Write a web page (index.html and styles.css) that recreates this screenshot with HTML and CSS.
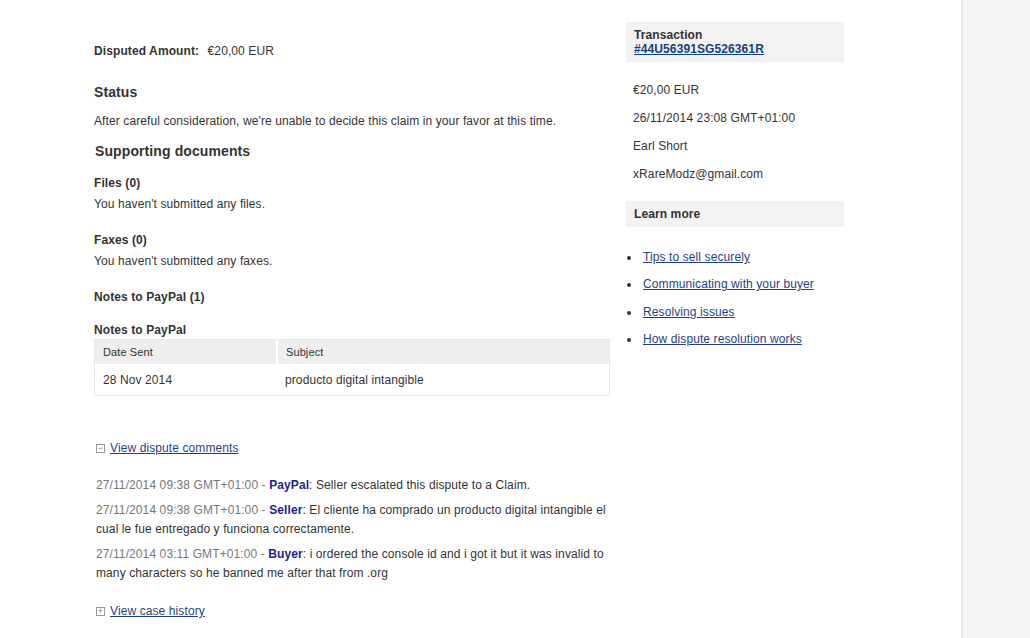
FILE: index.html
```html
<!DOCTYPE html>
<html lang="en">
<head>
    <meta charset="UTF-8">
    <title>Claim details</title>
    <link rel="stylesheet" href="styles.css">
</head>
<body>
    <div class="page">
        <div class="main">
            <div class="left">
                <div class="amount"><strong>Disputed Amount:</strong> <span>€20,00 EUR</span></div>

                <h2 class="status-title">Status</h2>
                <p class="status-text">After careful consideration, we're unable to decide this claim in your favor at this time.</p>

                <h2 class="docs-title">Supporting documents</h2>

                <h3 class="sub first">Files (0)</h3>
                <p class="sub-text">You haven't submitted any files.</p>

                <h3 class="sub">Faxes (0)</h3>
                <p class="sub-text">You haven't submitted any faxes.</p>

                <h3 class="sub">Notes to PayPal (1)</h3>
                <h3 class="sub notes">Notes to PayPal</h3>

                <table class="notes-table">
                    <thead>
                        <tr>
                            <th class="col-date">Date Sent</th>
                            <th>Subject</th>
                        </tr>
                    </thead>
                    <tbody>
                        <tr>
                            <td>28 Nov 2014</td>
                            <td>producto digital intangible</td>
                        </tr>
                    </tbody>
                </table>

                <div class="toggle comments-toggle">
                    <span class="box">&minus;</span>
                    <a href="#">View dispute comments</a>
                </div>

                <div class="comments">
                    <p><span class="time">27/11/2014 09:38 GMT+01:00 -</span> <b>PayPal</b>: Seller escalated this dispute to a Claim.</p>
                    <p><span class="time">27/11/2014 09:38 GMT+01:00 -</span> <b>Seller</b>: El cliente ha comprado un producto digital intangible el cual le fue entregado y funciona correctamente.</p>
                    <p><span class="time">27/11/2014 03:11 GMT+01:00 -</span> <b>Buyer</b>: i ordered the console id and i got it but it was invalid to many characters so he banned me after that from .org</p>
                </div>

                <div class="toggle history-toggle">
                    <span class="box">+</span>
                    <a href="#">View case history</a>
                </div>
            </div>

            <div class="side">
                <div class="side-head tx">
                    <strong>Transaction</strong>
                    <a href="#">#44U56391SG526361R</a>
                </div>
                <div class="tx-info">
                    <p>€20,00 EUR</p>
                    <p>26/11/2014 23:08 GMT+01:00</p>
                    <p>Earl Short</p>
                    <p>xRareModz@gmail.com</p>
                </div>

                <div class="side-head learn">
                    <strong>Learn more</strong>
                </div>
                <ul class="links">
                    <li><a href="#">Tips to sell securely</a></li>
                    <li><a href="#">Communicating with your buyer</a></li>
                    <li><a href="#">Resolving issues</a></li>
                    <li><a href="#">How dispute resolution works</a></li>
                </ul>
            </div>
        </div>
        <div class="strip"></div>
    </div>
</body>
</html>
```

FILE: styles.css
```css
html, body {
    height: 100%;
}

body {
    margin: 0;
    font-family: "Liberation Sans", Arial, sans-serif;
    font-size: 12px;
    letter-spacing: 0.1px;
    color: #333;
    background: #fff;
}

.page {
    display: flex;
    min-height: 100%;
}

.main {
    width: 961px;
    display: flex;
    padding-left: 94px;
    box-sizing: border-box;
}

.strip {
    flex: 1;
    background: #f5f5f5;
    border-left: 2px solid #e6e6e6;
}

p, h2, h3 {
    margin: 0;
}

a {
    color: #1f3f86;
    text-decoration: underline;
}

/* left column */
.left {
    width: 516px;
    padding-top: 41px;
}

.amount {
    line-height: 20px;
}

.amount strong {
    margin-right: 5px;
}

h2 {
    font-size: 14px;
    font-weight: bold;
    line-height: 20px;
}

.status-title {
    margin-top: 21px;
}

.status-text {
    line-height: 20px;
    margin-top: 9px;
}

.docs-title {
    margin-top: 10px;
    padding-left: 1px;
}

h3.sub {
    font-size: 12px;
    font-weight: bold;
    line-height: 20px;
    margin-top: 16px;
}

h3.sub.first {
    margin-top: 12px;
}

h3.sub.notes {
    margin-top: 14px;
    line-height: 19px;
}

.sub-text {
    line-height: 20px;
    margin-top: 1px;
}

.notes-table {
    width: 100%;
    border-collapse: collapse;
    border: 1px solid #e6e6e6;
    margin-top: -1px;
}

.notes-table th {
    background: #eeeeee;
    font-weight: normal;
    font-size: 11px;
    text-align: left;
    height: 24px;
    padding: 0 8px;
}

.notes-table th.col-date {
    width: 165px;
    border-right: 2px solid #fff;
}

.notes-table td {
    height: 31px;
    padding: 0 8px;
}

.toggle {
    display: flex;
    align-items: center;
    line-height: 20px;
    padding-left: 2px;
}

.comments-toggle {
    margin-top: 42px;
}

.box {
    width: 7px;
    height: 7px;
    border: 1px solid #999;
    font-size: 9px;
    line-height: 7px;
    color: #777;
    text-align: center;
    margin-right: 5px;
    overflow: hidden;
}

.comments {
    margin-top: 18px;
    padding-left: 2px;
}

.comments p {
    line-height: 19px;
    margin-bottom: 6px;
}

.comments .time {
    color: #777;
}

.comments b {
    color: #1c1f8c;
}

.history-toggle {
    margin-top: 18px;
}

/* right column */
.side {
    width: 218px;
    margin-left: 16px;
    padding-top: 22px;
}

.side-head {
    background: #f2f2f2;
    padding: 6px 8px;
}

.side-head strong {
    display: block;
}

.tx {
    line-height: 14px;
}

.tx a {
    display: block;
    font-weight: bold;
    color: #124180;
}

.tx-info {
    padding-left: 7px;
    margin-top: 18px;
}

.tx-info p {
    line-height: 20px;
    margin-bottom: 8px;
}

.learn {
    margin-top: 17px;
    padding: 3px 8px;
    line-height: 20px;
}

.links {
    list-style: none;
    margin: 17px 0 0;
    padding: 0;
}

.links li {
    display: flex;
    align-items: center;
    line-height: 27.4px;
    padding-left: 1px;
}

.links li::before {
    content: "";
    width: 4px;
    height: 4px;
    border-radius: 50%;
    background: #333;
    margin-right: 12px;
}
```
